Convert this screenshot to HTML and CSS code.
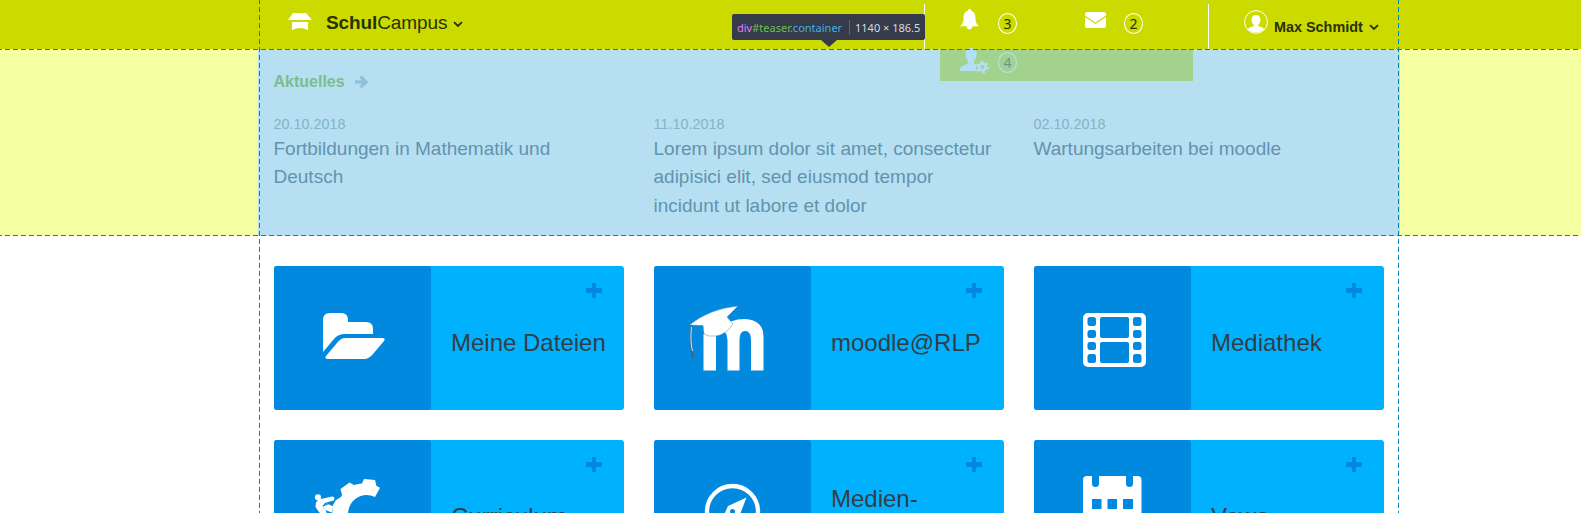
FILE: index.html
```html
<!DOCTYPE html>
<html lang="de">
<head>
<meta charset="utf-8">
<title>SchulCampus</title>
<link rel="stylesheet" href="styles.css">
</head>
<body>
<header class="header">
  <div class="header-inner">
    <div class="brand">
      <svg class="brand-icon" width="24" height="18" viewBox="0 0 24 18"><path d="M5 0h13l6 7H0zM4 9h16v8.300c-5-3-11-3-16 0z"/></svg>
      <span class="brand-name"><b>Schul</b>Campus</span>
      <svg class="chevron" width="10" height="7" viewBox="0 0 10 7"><path d="M1 1.200l4 3.800 4-3.800"/></svg>
    </div>
    <div class="notices">
      <svg class="bell" width="19" height="21" viewBox="0 0 19 21"><path d="M9.500 0c1 0 1.600.7 1.500 1.600C14 2.400 15.400 5 15.400 8c0 5 1.200 7 3.600 9.200H0C2.400 15 3.600 13 3.600 8c0-3 1.400-5.600 4.400-6.400C7.900.7 8.500 0 9.500 0zM6.500 17h6c-.2 2.200-1.400 3.500-3 3.500s-2.800-1.300-3-3.500z"/></svg>
      <span class="count">3</span>
      <svg class="mail" width="21" height="17" viewBox="0 0 21 17"><path d="M2 0h17c1.200 0 2 .8 2 2v1.500L10.500 10.500 0 3.500V2C0 .8.800 0 2 0zM0 5l10.500 7L21 5v9c0 1.200-.8 2-2 2H2c-1.200 0-2-.8-2-2z"/></svg>
      <span class="count">2</span>
    </div>
    <div class="user">
      <svg class="avatar" width="24" height="24" viewBox="0 0 24 24"><circle cx="12" cy="12" r="11.400" fill="none" stroke="#fff"/><path d="M12 5c3 0 4.600 2 4.400 5-.1 2-.9 3.500-2 4.500v1.500l6 2.500A11 11 0 0 1 3.600 18.500l6-2.500v-1.500c-1.100-1-1.900-2.500-2-4.500C7.400 7 9 5 12 5z"/></svg>
      <b class="user-name">Max Schmidt</b>
      <svg class="chevron" width="10" height="7" viewBox="0 0 10 7"><path d="M1 1.200l4 3.800 4-3.800"/></svg>
    </div>
  </div>
</header>

<section class="teaser-band">
  <div class="teaser">
    <div class="teaser-head">Aktuelles
      <svg width="13" height="14" viewBox="0 0 13 14"><path d="M0 7h10M5.500 1.600L11 7l-5.500 5.400" fill="none" stroke="#90c1da" stroke-width="3.400"/></svg>
    </div>
    <div class="news">
      <article><time>20.10.2018</time><p>Fortbildungen in Mathematik und<br>Deutsch</p></article>
      <article><time>11.10.2018</time><p>Lorem ipsum dolor sit amet, consectetur<br>adipisici elit, sed eiusmod tempor<br>incidunt ut labore et dolor</p></article>
      <article><time>02.10.2018</time><p>Wartungsarbeiten bei moodle</p></article>
    </div>
    <div class="submenu">
      <svg class="user-gear" width="30" height="26" viewBox="0 0 30 26"><path d="M11 0c4 0 6 2.500 5.600 6.500-.2 3-1.200 5-2.600 6.500v2.500l3 1.500q-2 3 .5 6H0c0-3 .5-4.400 3-5.300l5-2.200V13C6.600 11.500 5.600 9.500 5.400 6.500 5 2.500 7 0 11 0z"/><circle cx="22.500" cy="19" r="3.300" fill="none" stroke="#b3dff2" stroke-width="2.600"/><circle cx="22.500" cy="19" r="5.200" fill="none" stroke="#b3dff2" stroke-width="2.400" stroke-dasharray="2.700 2.745"/></svg>
      <span class="count count-faded">4</span>
    </div>
  </div>
</section>

<main class="tiles">
  <a class="tile"><span class="tile-icon"><svg width="157" height="144" viewBox="0 0 157 144"><path d="M49 86V54q0-7 7-7h11q7 0 7 7v2h18q7 0 7 7v5H71q-7 0-11 5zM71 72h37q4 0 2 3L99 88q-4 5-9 5H54q-4 0-2-3l11-13q4-5 8-5z"/></svg></span><span class="tile-title">Meine Dateien</span><i class="plus"></i></a>
  <a class="tile"><span class="tile-icon"><svg width="157" height="144" viewBox="0 0 157 144"><path d="M49.500 104.500V68H62v36.500zM69 62q6-9 22-9 18.500 1 18.500 18v33.500H97V74q0-9-6-9-5.500 0-5.500 9v30.500H73.500V74q0-5-3-9z"/><path d="M35.500 59Q55 43 84 40L73 51l6 7Q73 68 62 70 54 71 50 68l-1-8.500z" stroke="#3b8fca" stroke-width=".5"/><path d="M37.500 60q-1.500 18 1.500 32" fill="none" stroke="#45657c" stroke-width="2"/><path d="M37.500 61q-1.500 15 1 24" fill="none" stroke="#d4eafa" stroke-width="1"/></svg></span><span class="tile-title">moodle@RLP</span><i class="plus"></i></a>
  <a class="tile"><span class="tile-icon"><svg width="157" height="144" viewBox="0 0 157 144"><rect x="49" y="47" width="63" height="54" rx="5"/><g fill="#0089de"><rect x="66" y="51" width="29" height="21" rx="2"/><rect x="66" y="76" width="29" height="21" rx="2"/><rect x="53.500" y="51" width="8.500" height="9" rx="2.500"/><rect x="53.500" y="64" width="8.500" height="8" rx="2.500"/><rect x="53.500" y="76" width="8.500" height="8" rx="2.500"/><rect x="53.500" y="88" width="8.500" height="9" rx="2.500"/><rect x="99" y="51" width="8.500" height="9" rx="2.500"/><rect x="99" y="64" width="8.500" height="8" rx="2.500"/><rect x="99" y="76" width="8.500" height="8" rx="2.500"/><rect x="99" y="88" width="8.500" height="9" rx="2.500"/></g></svg></span><span class="tile-title">Mediathek</span><i class="plus"></i></a>
  <a class="tile"><span class="tile-icon"><svg width="157" height="144" viewBox="0 0 157 144"><path d="M58 75l1-10 3-5 5-3 1-2-1.500-6 9-6.500 4.500 2.500q4-1.500 8-1.500l2-4.500 11 1 1.500 6 3.500 1.800-5 9.200C90 51 74 58 74 75z"/><circle cx="44" cy="57.300" r="3.100"/><path d="M42 62.500q1.500-3 5-3.500l10-2.300q3.500-.5 3.500 2t-3 2.300l-6.500 2-2.500 3 3.500 5 2 6h-5l-4-5-3.500-5zM49 66.500l4-3 6.500 3-2 6-6-2.500z"/><path d="M49.500 66l5.500-2.500" stroke="#0089de" fill="none"/></svg></span><span class="tile-title">Curriculum</span><i class="plus"></i></a>
  <a class="tile"><span class="tile-icon"><svg width="157" height="144" viewBox="0 0 157 144"><circle cx="78.500" cy="71.500" r="25.500" fill="none" stroke="#fff" stroke-width="4.300"/><path fill-rule="evenodd" d="M92.500 57.500L74 66l-9 20 20-9zM78.500 69a2.500 2.500 0 1 1 0 5 2.500 2.500 0 0 1 0-5z"/></svg></span><span class="tile-title">Medien-<br>kompass</span><i class="plus"></i></a>
  <a class="tile"><span class="tile-icon"><svg width="157" height="144" viewBox="0 0 157 144"><rect x="49" y="36" width="58.500" height="60" rx="4"/><g fill="#0089de"><path d="M58 35h7v8.500a3.500 3.500 0 0 1-7 0zM92 35h7v8.500a3.500 3.500 0 0 1-7 0zM58 59h9.500v10H58zM73.500 59H83v10h-9.500zM89 59h10v10H89z"/></g></svg></span><span class="tile-title">Vewa</span><i class="plus"></i></a>
</main>

<div class="guide guide-h guide-top"></div>
<div class="guide guide-h guide-bottom"></div>
<div class="guide guide-v guide-left"></div>
<div class="guide guide-v guide-right"></div>
<div class="infobar"><span class="selector"><span class="tag">div</span><span class="id">#teaser</span><span class="cls">.container</span></span><span class="size">1140 × 186.5</span></div>
</body>
</html>
```
FILE: styles.css
```css
* { box-sizing: border-box; }
html, body { height: 100%; }
body {
  margin: 0;
  overflow: hidden;
  position: relative;
  background: #fff;
  color: #333d47;
  font-family: "Liberation Sans", Arial, sans-serif;
}
svg { display: block; flex: none; fill: #fff; }

.header { height: 49px; background: #cbdb00; color: #2a3100; }
.header-inner { display: flex; width: 1140px; height: 49px; margin-left: 259px; }
.chevron path { fill: none; stroke: #2a3100; stroke-width: 1.8; }
.brand { display: flex; width: 665px; padding-left: 29px; }
.brand-icon { margin-top: 13px; }
.brand-name { margin: 11px 0 0 14px; font-size: 19px; line-height: 24px; letter-spacing: -0.1px; }
.brand .chevron { margin: 21px 0 0 6px; }
.notices {
  display: flex;
  width: 285px;
  height: 45px;
  margin-top: 4px;
  padding-left: 35px;
  border: solid #fff;
  border-width: 0 1px;
}
.bell { margin-top: 5px; }
.count {
  width: 19px;
  height: 21px;
  margin: 9px 0 0 19px;
  border: 1px solid #fff;
  border-radius: 50%;
  font: 14px/19px "Noto Sans", sans-serif;
  text-align: center;
}
.mail { margin: 8px 0 0 68px; }
.notices .mail + .count { margin-left: 18px; }
.user { display: flex; padding-left: 35px; }
.avatar { margin-top: 10px; }
.user-name { margin: 18px 0 0 6px; font-size: 14.4px; line-height: 18px; white-space: nowrap; }
.user .chevron { margin: 24px 0 0 6px; }

.teaser-band { height: 187px; padding: 0 181px 0 258px; background: #f3ffa1; }
.teaser { position: relative; height: 187px; padding: 22px 15px 0 15.5px; background: #b6e0f2; }
.teaser-head {
  display: flex;
  align-items: center;
  gap: 10px;
  height: 22px;
  color: #7cbd8f;
  font-size: 16px;
  font-weight: bold;
}
.news { display: grid; grid-template-columns: repeat(3, 350px); gap: 30px; margin-top: 22px; }
.news time { display: block; font-size: 14.4px; line-height: 18px; color: #84b2c9; }
.news p { margin: 2px 0 0; font-size: 19px; line-height: 28.35px; color: #6293ae; white-space: nowrap; }
.submenu {
  position: absolute;
  top: 0;
  left: 682px;
  display: flex;
  width: 253px;
  height: 32px;
  padding-left: 20px;
  background: #a3d28f;
}
.user-gear { margin-top: -1px; fill: #b3dff2; }
.count-faded { margin: 3px 0 0 8px; border-color: #b9e2ee; color: #5e97a8; }

.tiles { display: grid; grid-template-columns: repeat(3, 350px); gap: 30px; margin: 30px 0 0 274px; }
.tile { position: relative; display: flex; height: 144px; border-radius: 3px; background: #00b1fd; }
.tile-icon { width: 157px; border-radius: 3px; background: #0089de; }
.tile-title { align-self: center; padding: 9px 0 0 20px; font-size: 24px; line-height: 36px; white-space: nowrap; }
.plus {
  position: absolute;
  top: 17px;
  right: 22px;
  width: 16px;
  height: 15px;
  background:
    linear-gradient(#0089de, #0089de) center / 16px 5px no-repeat,
    linear-gradient(#0089de, #0089de) center / 4px 15px no-repeat;
}

.guide { position: absolute; }
.guide-h { left: 0; width: 100%; height: 1px; background: repeating-linear-gradient(90deg, #0084bd 0 2px, transparent 2px 5px, #0084bd 5px 8px); }
.guide-v { top: 0; width: 1px; height: 100%; background: repeating-linear-gradient(#0084bd 0 4px, transparent 4px 7px, #0084bd 7px 8px); }
.guide-top { top: 49px; }
.guide-bottom { top: 235px; }
.guide-left { left: 259px; }
.guide-right { left: 1398px; }

.infobar {
  position: absolute;
  top: 14px;
  left: 732px;
  display: flex;
  align-items: center;
  width: 193px;
  height: 26px;
  padding-left: 5px;
  border-radius: 2px;
  background: #353b48;
  font: 11px/15px "Noto Sans", sans-serif;
  white-space: nowrap;
}
.infobar::after {
  content: "";
  position: absolute;
  top: 26px;
  left: 89px;
  border: solid transparent;
  border-width: 7px 8px 0;
  border-top-color: #353b48;
}
.selector { width: 112px; }
.tag { color: #df80ff; }
.id { color: #70bf53; }
.cls { color: #46afe3; }
.size { padding-left: 5px; border-left: 1px solid #5a6375; color: #d5dae2; }
```
